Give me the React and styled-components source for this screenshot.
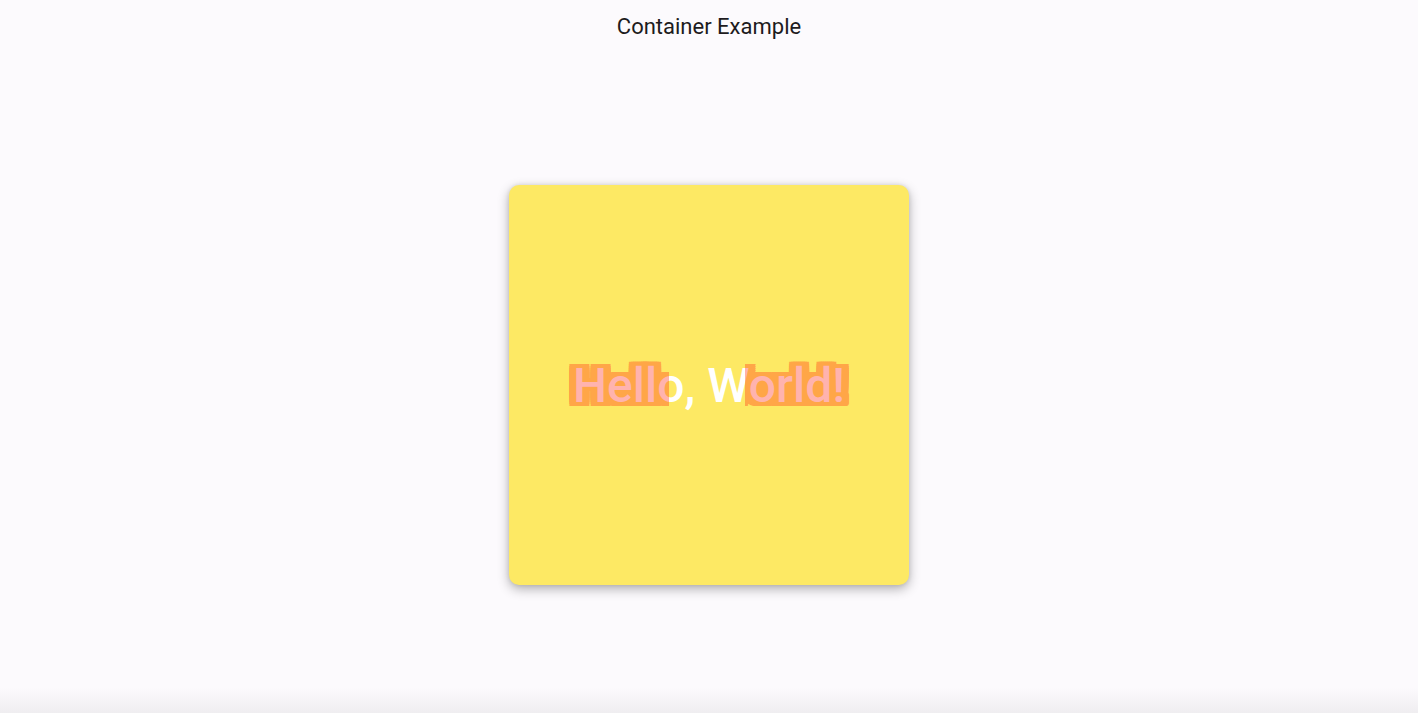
import React from "react";
import styled, { createGlobalStyle } from "styled-components";

const Global = createGlobalStyle`
  html, body { margin: 0; padding: 0; }
  body {
    background: #fcfafd;
    font-family: Roboto, "Noto Sans", sans-serif;
    overflow: hidden;
  }
`;

const Page = styled.div`
  width: 100vw;
  height: 100vh;
  display: flex;
  flex-direction: column;
  position: relative;
`;

const AppBar = styled.header`
  height: 56px;
  flex: none;
  display: flex;
  align-items: center;
  justify-content: center;
  font-size: 22px;
  color: #1d1b20;
  padding-bottom: 4px;
  box-sizing: border-box;
`;

const Body = styled.main`
  flex: 1;
  display: flex;
  align-items: center;
  justify-content: center;
`;

const Card = styled.div`
  width: 400px;
  height: 400px;
  border-radius: 10px;
  background: #fde964;
  box-shadow: 0 4px 12px rgba(0, 0, 0, 0.3), 0 0 4px rgba(0, 0, 0, 0.1);
  display: flex;
  align-items: center;
  justify-content: center;
`;

const Word = styled.div`
  position: relative;
  font-size: 48px;
  font-weight: 500;
  line-height: 1;
  white-space: nowrap;
  color: #ffffff;
  margin-top: 2px;
`;

const offsets = [];
for (let dx = -7; dx <= 7; dx += 2) {
  for (let dy = -4; dy <= 4; dy += 2) {
    offsets.push(`${dx}px ${dy}px 0 #ffa647`);
  }
}

const Glitch = styled.span`
  position: absolute;
  left: 0;
  top: 0;
  color: #ffb3ae;
  text-shadow: ${offsets.join(", ")};
  clip-path: inset(-8px ${(p) => p.$right}px -8px ${(p) => p.$left}px);
`;

const BottomShade = styled.div`
  position: absolute;
  left: 0;
  right: 0;
  bottom: 0;
  height: 26px;
  background: linear-gradient(to bottom, rgba(0, 0, 0, 0), rgba(0, 0, 0, 0.05));
  pointer-events: none;
`;

export default function App() {
  const text = "Hello, World!";
  return (
    <Page>
      <Global />
      <AppBar>Container Example</AppBar>
      <Body>
        <Card>
          <Word>
            {text}
            <Glitch aria-hidden $left={-10} $right={176}>{text}</Glitch>
            <Glitch aria-hidden $left={172} $right={-10}>{text}</Glitch>
          </Word>
        </Card>
      </Body>
      <BottomShade />
    </Page>
  );
}
